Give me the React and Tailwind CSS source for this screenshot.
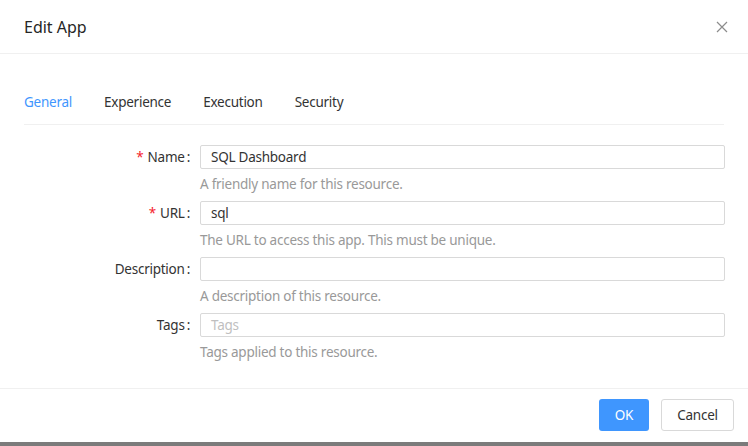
import React from "react";

function Field({ label, required, value, placeholder, help }) {
  return (
    <div className="flex h-[56px]">
      <div className="w-[176px] shrink-0 flex justify-end items-start h-[24px] pr-[10px]">
        <span className="leading-[24px] text-[#333]">
          {required && <span className="text-[#f5222d] mr-[4px]">*</span>}
          {label}
        </span>
        <span className="leading-[24px] text-[#333] ml-[2px]">:</span>
      </div>
      <div className="flex-1 flex flex-col">
        <div className="h-[24px] border border-[#d9d9d9] rounded-[2px] px-[10px] flex items-center text-[#333]">
          {value ? value : <span className="text-[#bfbfbf]">{placeholder}</span>}
        </div>
        <div className="text-[#999] leading-[22px] mt-[4px]">{help}</div>
      </div>
    </div>
  );
}

export default function App() {
  return (
    <div
      className="w-[748px] h-[446px] bg-[#7b7b7b] flex flex-col"
      style={{ fontFamily: '"Noto Sans", "Open Sans", sans-serif' }}
    >
      <div className="h-[442px] bg-white flex flex-col">
        <div className="h-[54px] border-b border-[#f0f0f0] flex items-center justify-between px-[24px] shrink-0">
          <span className="text-[16px] text-[#262626]">Edit App</span>
          <svg width="12" height="12" viewBox="0 0 12 12" className="mr-[-4px]">
            <path d="M1 1 L11 11 M11 1 L1 11" stroke="#8c8c8c" strokeWidth="1.2" />
          </svg>
        </div>
        <div className="flex-1 px-[24px] pt-[36px] text-[13.5px] tracking-[-0.25px]">
          <div className="flex gap-[32px] h-[35px] border-b border-[#f0f0f0] items-start">
            <span className="text-[#3f96fe] leading-[24px]">General</span>
            <span className="text-[#333] leading-[24px]">Experience</span>
            <span className="text-[#333] leading-[24px]">Execution</span>
            <span className="text-[#333] leading-[24px]">Security</span>
          </div>
          <div className="pt-[20px] w-[701px]">
            <Field label="Name" required value="SQL Dashboard" help="A friendly name for this resource." />
            <Field label="URL" required value="sql" help="The URL to access this app. This must be unique." />
            <Field label="Description" value="" help="A description of this resource." />
            <Field label="Tags" placeholder="Tags" help="Tags applied to this resource." />
          </div>
        </div>
        <div className="h-[54px] border-t border-[#f0f0f0] flex items-start justify-end gap-[12px] pr-[14px] pt-[10px] shrink-0 text-[13.5px] tracking-[-0.25px]">
          <button className="w-[50px] h-[32px] rounded-[3px] bg-[#3f96fe] text-white">OK</button>
          <button className="w-[73px] h-[32px] rounded-[3px] border border-[#d9d9d9] bg-white text-[#333]">Cancel</button>
        </div>
      </div>
    </div>
  );
}
